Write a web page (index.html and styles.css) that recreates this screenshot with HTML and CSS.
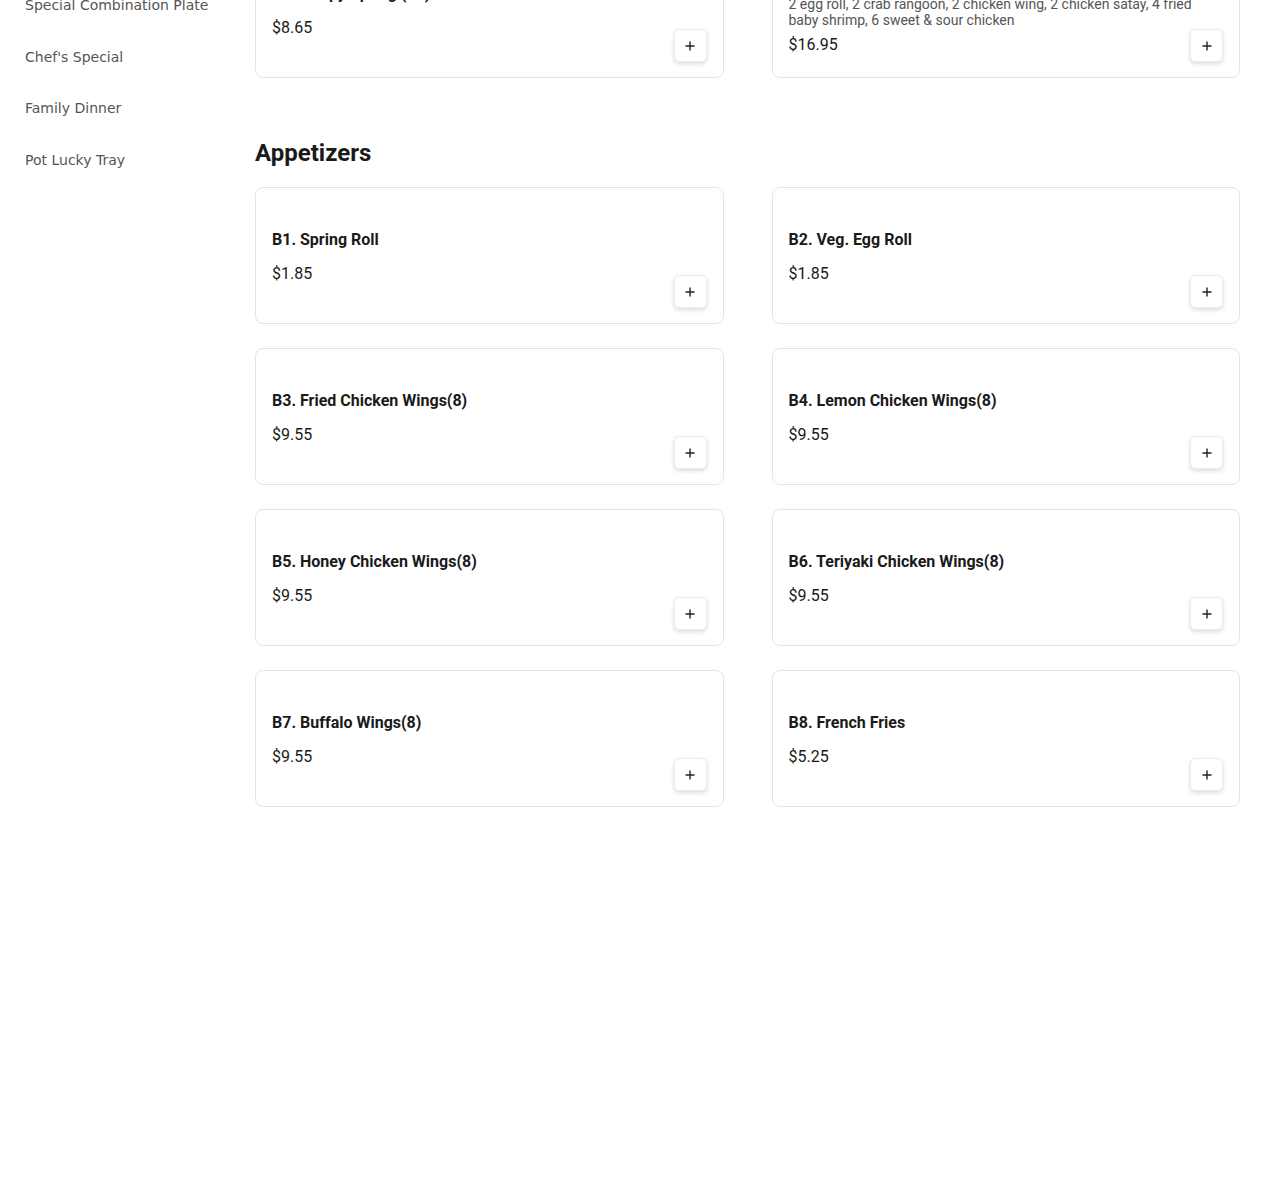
FILE: index.html
```html
<!DOCTYPE html>
<html lang="en">
<head>
<meta charset="utf-8">
<title>Menu</title>
<link rel="stylesheet" href="styles.css">
</head>
<body>
<div class="page">
  <nav class="sidebar">
    <a class="nav-item" href="#">Special Combination Plate</a>
    <a class="nav-item" href="#">Chef's Special</a>
    <a class="nav-item" href="#">Family Dinner</a>
    <a class="nav-item" href="#">Pot Lucky Tray</a>
  </nav>
  <main class="menu">
    <section class="section">
      <div class="grid">
        <div class="card">
          <div class="info">
            <div class="title">P1. Crispy Spring (12)</div>
            <div class="price">$8.65</div>
          </div>
          <button class="add" aria-label="Add"><svg viewBox="0 0 10 10" width="10" height="10"><path d="M5 0.5v9M0.5 5h9" stroke="#222" stroke-width="1.4" fill="none"/></svg></button>
        </div>
        <div class="card">
          <div class="info">
            <div class="title">P2. Pu Pu Platter (for 2)</div>
            <div class="desc">2 egg roll, 2 crab rangoon, 2 chicken wing, 2 chicken satay, 4 fried baby shrimp, 6 sweet &amp; sour chicken</div>
            <div class="price">$16.95</div>
          </div>
          <button class="add" aria-label="Add"><svg viewBox="0 0 10 10" width="10" height="10"><path d="M5 0.5v9M0.5 5h9" stroke="#222" stroke-width="1.4" fill="none"/></svg></button>
        </div>
      </div>
    </section>

    <section class="section">
      <h2 class="section-title">Appetizers</h2>
      <div class="grid">
        <div class="card">
          <div class="info"><div class="title">B1. Spring Roll</div><div class="price">$1.85</div></div>
          <button class="add" aria-label="Add"><svg viewBox="0 0 10 10" width="10" height="10"><path d="M5 0.5v9M0.5 5h9" stroke="#222" stroke-width="1.4" fill="none"/></svg></button>
        </div>
        <div class="card">
          <div class="info"><div class="title">B2. Veg. Egg Roll</div><div class="price">$1.85</div></div>
          <button class="add" aria-label="Add"><svg viewBox="0 0 10 10" width="10" height="10"><path d="M5 0.5v9M0.5 5h9" stroke="#222" stroke-width="1.4" fill="none"/></svg></button>
        </div>
        <div class="card">
          <div class="info"><div class="title">B3. Fried Chicken Wings(8)</div><div class="price">$9.55</div></div>
          <button class="add" aria-label="Add"><svg viewBox="0 0 10 10" width="10" height="10"><path d="M5 0.5v9M0.5 5h9" stroke="#222" stroke-width="1.4" fill="none"/></svg></button>
        </div>
        <div class="card">
          <div class="info"><div class="title">B4. Lemon Chicken Wings(8)</div><div class="price">$9.55</div></div>
          <button class="add" aria-label="Add"><svg viewBox="0 0 10 10" width="10" height="10"><path d="M5 0.5v9M0.5 5h9" stroke="#222" stroke-width="1.4" fill="none"/></svg></button>
        </div>
        <div class="card">
          <div class="info"><div class="title">B5. Honey Chicken Wings(8)</div><div class="price">$9.55</div></div>
          <button class="add" aria-label="Add"><svg viewBox="0 0 10 10" width="10" height="10"><path d="M5 0.5v9M0.5 5h9" stroke="#222" stroke-width="1.4" fill="none"/></svg></button>
        </div>
        <div class="card">
          <div class="info"><div class="title">B6. Teriyaki Chicken Wings(8)</div><div class="price">$9.55</div></div>
          <button class="add" aria-label="Add"><svg viewBox="0 0 10 10" width="10" height="10"><path d="M5 0.5v9M0.5 5h9" stroke="#222" stroke-width="1.4" fill="none"/></svg></button>
        </div>
        <div class="card">
          <div class="info"><div class="title">B7. Buffalo Wings(8)</div><div class="price">$9.55</div></div>
          <button class="add" aria-label="Add"><svg viewBox="0 0 10 10" width="10" height="10"><path d="M5 0.5v9M0.5 5h9" stroke="#222" stroke-width="1.4" fill="none"/></svg></button>
        </div>
        <div class="card">
          <div class="info"><div class="title">B8. French Fries</div><div class="price">$5.25</div></div>
          <button class="add" aria-label="Add"><svg viewBox="0 0 10 10" width="10" height="10"><path d="M5 0.5v9M0.5 5h9" stroke="#222" stroke-width="1.4" fill="none"/></svg></button>
        </div>
      </div>
    </section>
  </main>
</div>
</body>
</html>
```

FILE: styles.css
```css
* { box-sizing: border-box; }

html, body {
  margin: 0;
  padding: 0;
  background: #ffffff;
  overflow: hidden;
}

.page {
  display: grid;
  grid-template-columns: 230px 1fr;
  padding: 0 30px 0 25px;
  align-items: start;
}

.sidebar {
  display: flex;
  flex-direction: column;
  margin-top: -19.75px;
}

.nav-item {
  font-family: "DejaVu Sans", sans-serif;
  font-size: 14px;
  line-height: 19.5px;
  padding: 16px 0;
  color: #555555;
  text-decoration: none;
}

.menu {
  margin-top: -59px;
  display: flex;
  flex-direction: column;
  gap: 61px;
  font-family: Roboto, "Liberation Sans", sans-serif;
  color: #1a1a1a;
}

.section-title {
  margin: 0 0 20px;
  font-size: 24px;
  line-height: 28px;
  font-weight: 700;
  color: #1a1a1a;
}

.grid {
  display: grid;
  grid-template-columns: 1fr 1fr;
  column-gap: 48px;
  row-gap: 24px;
}

.card {
  display: grid;
  grid-template-columns: 1fr;
  grid-template-rows: 1fr;
  min-height: 137px;
  padding: 17px 16px 15px 16px;
  border: 1px solid #e4e4e4;
  border-radius: 8px;
  background: #fff;
}

.info {
  grid-area: 1 / 1;
  align-self: center;
  min-width: 0;
}

.title {
  font-size: 16px;
  line-height: 20px;
  font-weight: 700;
  color: #1a1a1a;
}

.desc {
  margin-top: 10px;
  font-size: 14px;
  line-height: 16px;
  color: #555555;
}

.price {
  margin-top: 14px;
  font-size: 16px;
  line-height: 20px;
  color: #1a1a1a;
}

.desc + .price {
  margin-top: 7px;
}

.add {
  grid-area: 1 / 1;
  align-self: end;
  justify-self: end;
  width: 33px;
  height: 33px;
  padding: 0;
  display: flex;
  align-items: center;
  justify-content: center;
  background: #fff;
  border: 1px solid #ececec;
  border-radius: 5px;
  box-shadow: 0 2px 4px rgba(0, 0, 0, 0.14);
  cursor: pointer;
}
```
